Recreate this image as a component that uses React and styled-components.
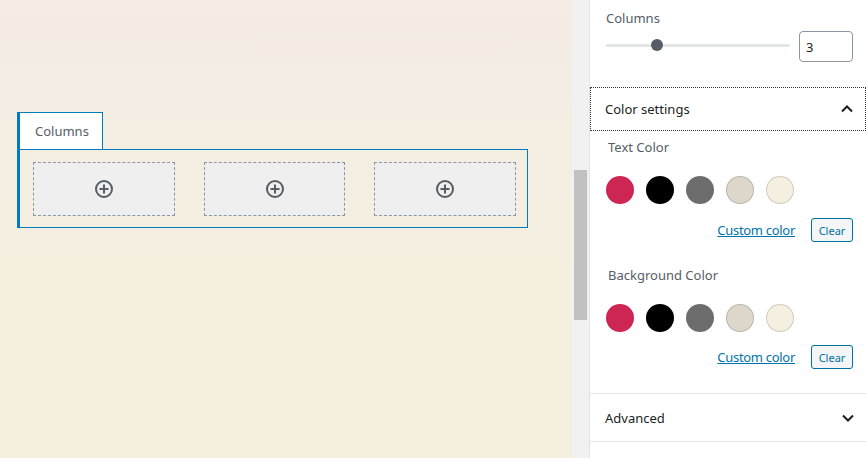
import React from "react";
import styled, { createGlobalStyle } from "styled-components";

const Global = createGlobalStyle`
  body {
    margin: 0;
    font-family: "Noto Sans", "Open Sans", sans-serif;
    font-size: 13px;
    color: #191e23;
  }
`;

const Page = styled.div`
  display: flex;
  height: 458px;
  width: 866px;
  overflow: hidden;
`;

const Canvas = styled.div`
  flex: 0 0 572px;
  background: linear-gradient(#f4ece5, #f5efe0 60%);
  padding: 112px 0 0 17px;
  box-sizing: border-box;
`;

const Track = styled.div`
  flex: 0 0 17px;
  background: #f1f1f1;
  padding: 170px 2px 0 2px;
  box-sizing: border-box;
`;

const Thumb = styled.div`
  height: 150px;
  background: #c1c1c1;
`;

const Sidebar = styled.div`
  flex: 0 0 277px;
  background: #fff;
  border-left: 1px solid #e2e4e7;
  box-sizing: border-box;
`;

const Block = styled.div`
  width: 511px;
  border-left: 3px solid #007cba;
  box-sizing: border-box;
`;

const Tab = styled.div`
  width: 83px;
  height: 37px;
  box-sizing: border-box;
  background: #fff;
  border-top: 1px solid #007cba;
  border-right: 1px solid #007cba;
  padding-left: 15px;
  display: flex;
  align-items: center;
  color: #555d66;
  font-size: 13px;
`;

const Inner = styled.div`
  border-top: 1px solid #007cba;
  border-right: 1px solid #007cba;
  border-bottom: 1px solid #007cba;
  display: grid;
  grid-template-columns: 142px 141px 142px;
  gap: 29px;
  padding: 12px 11px 11px 13px;
`;

const Slot = styled.div`
  height: 54px;
  box-sizing: border-box;
  border: 1px dashed #8d96a0;
  background: #efefef;
  display: flex;
  align-items: center;
  justify-content: center;
`;

const PlusIcon = () => (
  <svg width="20" height="20" viewBox="0 0 20 20">
    <circle cx="10" cy="10" r="8" fill="none" stroke="#555d66" strokeWidth="2" />
    <path d="M10 5.5v9M5.5 10h9" stroke="#555d66" strokeWidth="2" />
  </svg>
);

const ColumnsSection = styled.div`
  height: 87px;
  box-sizing: border-box;
  padding: 9px 12px 0 16px;
`;

const Label = styled.div`
  color: #555d66;
  line-height: 18px;
  margin-left: ${(p) => (p.$indent ? "2px" : "0")};
`;

const SliderRow = styled.div`
  display: flex;
  align-items: center;
  margin-top: 4px;
  gap: 9px;
`;

const Rail = styled.div`
  position: relative;
  width: 184px;
  height: 3px;
  margin-top: -3px;
  background: #e2e4e7;
  border-radius: 2px;
`;

const Knob = styled.div`
  position: absolute;
  top: -5px;
  width: 12px;
  height: 12px;
  margin-left: -6px;
  border-radius: 50%;
  background: #555d66;
`;

const NumberBox = styled.div`
  width: 54px;
  height: 31px;
  box-sizing: border-box;
  border: 1px solid #8d96a0;
  border-radius: 4px;
  padding-left: 6px;
  display: flex;
  align-items: center;
  color: #191e23;
`;

const PanelHeader = styled.div`
  display: flex;
  align-items: center;
  justify-content: space-between;
  height: ${(p) => p.$h}px;
  box-sizing: border-box;
  padding: 0 6px 0 ${(p) => p.$pl}px;
  border: ${(p) => (p.$focus ? "1px dotted #333" : "none")};
  border-bottom: ${(p) => (p.$focus ? "1px dotted #333" : "1px solid #e2e4e7")};
  font-weight: 400;
  color: #191e23;
`;

const PanelBody = styled.div`
  padding: 7px 13px 24px 16px;
  border-bottom: 1px solid #e2e4e7;
`;

const Swatches = styled.div`
  display: flex;
  gap: 12px;
  margin-top: ${(p) => p.$mt}px;
`;

const Swatch = styled.div`
  width: 28px;
  height: 28px;
  border-radius: 50%;
  background: ${(p) => p.$c};
  box-shadow: inset 0 0 0 1px ${(p) => (p.$light ? "rgba(0,0,0,0.15)" : "transparent")};
`;

const Actions = styled.div`
  display: flex;
  justify-content: flex-end;
  align-items: center;
  gap: 16px;
  margin-top: ${(p) => p.$mt}px;
`;

const Link = styled.a`
  color: #0073aa;
  text-decoration: underline;
  font-size: 13px;
  letter-spacing: -0.3px;
`;

const ClearBtn = styled.div`
  width: 42px;
  height: 24px;
  box-sizing: border-box;
  border: 1px solid #0071a1;
  border-radius: 3px;
  background: #f3f5f6;
  color: #0071a1;
  font-size: 11px;
  display: flex;
  align-items: center;
  justify-content: center;
`;

const Spacer = styled.div`
  height: ${(p) => p.$h}px;
`;

const Chevron = ({ up }) => (
  <svg width="24" height="24" viewBox="0 0 24 24">
    <path
      d={up ? "M7 14.5l5-5 5 5" : "M7 9.5l5 5 5-5"}
      fill="none"
      stroke="#191e23"
      strokeWidth="2"
    />
  </svg>
);

const colors = [
  { c: "#cd2653" },
  { c: "#000000" },
  { c: "#6d6d6d" },
  { c: "#dcd7ca", light: true },
  { c: "#f5efe0", light: true },
];

const ColorGroup = ({ label, first }) => (
  <>
    {!first && <Spacer $h={24} />}
    <Label $indent>{label}</Label>
    <Swatches $mt={20}>
      {colors.map((s) => (
        <Swatch key={s.c} $c={s.c} $light={s.light} />
      ))}
    </Swatches>
    <Actions $mt={first ? 14 : 13}>
      <Link>Custom color</Link>
      <ClearBtn>Clear</ClearBtn>
    </Actions>
  </>
);

export default function App() {
  return (
    <Page>
      <Global />
      <Canvas>
        <Block>
          <Tab>Columns</Tab>
          <Inner>
            {[0, 1, 2].map((i) => (
              <Slot key={i}>
                <PlusIcon />
              </Slot>
            ))}
          </Inner>
        </Block>
      </Canvas>
      <Track>
        <Thumb />
      </Track>
      <Sidebar>
        <ColumnsSection>
          <Label>Columns</Label>
          <SliderRow>
            <Rail>
              <Knob style={{ left: `${(51 / 184) * 100}%` }} />
            </Rail>
            <NumberBox>3</NumberBox>
          </SliderRow>
        </ColumnsSection>
        <PanelHeader $h={44} $pl={14} $focus>
          Color settings
          <Chevron up />
        </PanelHeader>
        <PanelBody>
          <ColorGroup label="Text Color" first />
          <ColorGroup label="Background Color" />
        </PanelBody>
        <PanelHeader $h={48} $pl={15}>
          Advanced
          <Chevron />
        </PanelHeader>
      </Sidebar>
    </Page>
  );
}
